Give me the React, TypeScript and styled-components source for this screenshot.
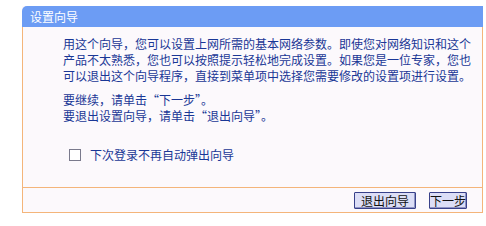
import React, { ReactElement, useState } from 'react';
import styled, { createGlobalStyle } from 'styled-components';

const GlobalStyle = createGlobalStyle`
  html, body {
    margin: 0;
    padding: 0;
    background: #ffffff;
  }
  body {
    font-family: "Noto Sans CJK SC", "DejaVu Sans", sans-serif;
  }
`;

const Panel = styled.div`
  margin: 6px 0 0 22px;
  width: 461px;
  background: #fcf9fc;
`;

const Header = styled.div`
  height: 21px;
  line-height: 21px;
  padding-left: 8px;
  background: #6c9cf4;
  color: #ffffff;
  font-size: 12px;
  border-top-left-radius: 5px;
`;

const Body = styled.div`
  border-left: 1px solid #f4b57a;
  border-right: 1px solid #f4b57a;
  border-bottom: 1px solid #f4b57a;
`;

const Content = styled.div`
  height: 161px;
  padding: 9px 0 0 40px;
  box-sizing: border-box;
  border-bottom: 1px solid #f4b57a;
  color: #1a3796;
  font-size: 12px;
  line-height: 16px;
  white-space: nowrap;
`;

const Para = styled.p<{ $gap?: number }>`
  margin: 0 0 ${(p) => p.$gap ?? 8}px 0;
`;

const CheckRow = styled.label`
  display: flex;
  align-items: center;
  gap: 9px;
  margin: 23px 0 0 6px;
  cursor: pointer;
`;

const Box = styled.span<{ $on: boolean }>`
  width: 10px;
  height: 10px;
  border: 1px solid #7a7a8c;
  background: #ffffff;
  display: flex;
  align-items: center;
  justify-content: center;
  font-size: 9px;
  color: #1a3796;
`;

const Footer = styled.div`
  height: 24px;
  display: flex;
  align-items: center;
  justify-content: flex-end;
  gap: 13px;
  padding-right: 15px;
`;

const Button = styled.button<{ $w: number }>`
  width: ${(p) => p.$w}px;
  height: 17px;
  padding: 0;
  font-family: "Noto Sans CJK SC", sans-serif;
  font-size: 12px;
  line-height: 15px;
  color: #111;
  background: #dcdef6;
  border: 1px solid #39418a;
  border-radius: 1px;
  box-shadow: inset -1px -1px 0 #8f94c4;
`;

const App = (): ReactElement => {
  const [checked, setChecked] = useState(false);

  return (
    <>
      <GlobalStyle />
      <Panel>
        <Header>设置向导</Header>
        <Body>
          <Content>
            <Para>
              用这个向导，您可以设置上网所需的基本网络参数。即使您对网络知识和这个
              <br />
              产品不太熟悉，您也可以按照提示轻松地完成设置。如果您是一位专家，您也
              <br />
              可以退出这个向导程序，直接到菜单项中选择您需要修改的设置项进行设置。
            </Para>
            <Para $gap={0}>
              要继续，请单击“下一步”。
              <br />
              要退出设置向导，请单击“退出向导”。
            </Para>
            <CheckRow onClick={() => setChecked(!checked)}>
              <Box $on={checked}>{checked ? '✓' : ''}</Box>
              下次登录不再自动弹出向导
            </CheckRow>
          </Content>
          <Footer>
            <Button $w={62}>退出向导</Button>
            <Button $w={38}>下一步</Button>
          </Footer>
        </Body>
      </Panel>
    </>
  );
};

export default App;
